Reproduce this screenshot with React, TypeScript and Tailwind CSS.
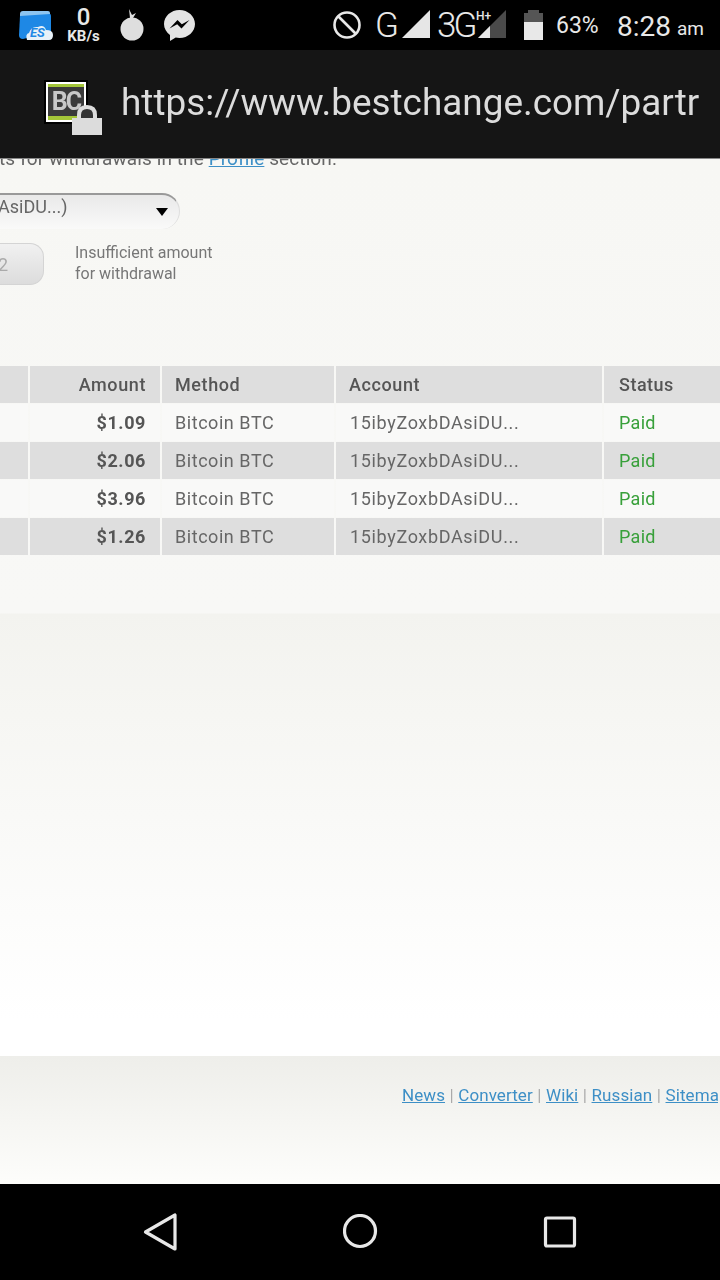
const rows = [
  { amount: '$1.09', shaded: false },
  { amount: '$2.06', shaded: true },
  { amount: '$3.96', shaded: false },
  { amount: '$1.26', shaded: true },
];

const links = ['News', 'Converter', 'Wiki', 'Russian', 'Sitemap'];

function EsIcon() {
  return (
    <svg width="34" height="30" viewBox="0 0 34 30" className="ml-[19px] shrink-0">
      <path d="M1 7 L1 4 Q1 1 4 1 L29 1 Q31 1 31 3 L31 6 Z" fill="#8cc4f0" />
      <path d="M1 6 L31 4 Q32 4 32 6 L32 22 L4 29 Q0 29 0 25 Z" fill="#1e88e5" />
      <path d="M8 30 Q6 24 10 23 Q12 16 19 17 Q25 14 27 20 Q34 20 34 25 Q34 30 30 30 Z" fill="#e8f1f8" />
      <text x="11" y="27" fontSize="13" fontWeight="700" fontStyle="italic" fill="#1e88e5" fontFamily="Roboto, sans-serif">ES</text>
    </svg>
  );
}

function BombIcon() {
  return (
    <svg width="24" height="32" viewBox="0 0 24 32" className="ml-[20px] shrink-0">
      <path d="M9 0 L12 6 L16 4 L13 9 L10 9 Z" fill="#dedede" />
      <circle cx="12" cy="20" r="11.500" fill="#dedede" />
    </svg>
  );
}

function MessengerIcon() {
  return (
    <svg width="31" height="31" viewBox="0 0 31 31" className="ml-[20px] shrink-0">
      <path d="M15.500 0 C7 0 0 6.300 0 14 C0 18.400 2.300 22.300 6 24.900 L6 31 L11.700 27.600 C12.900 27.900 14.200 28 15.500 28 C24 28 31 21.700 31 14 C31 6.300 24 0 15.500 0 Z" fill="#e4e4e4" />
      <path d="M5.500 18.500 L13.500 10 L17.800 14.300 L25.500 10 L17.500 18.500 L13.200 14.200 Z" fill="#000" />
    </svg>
  );
}

function StatusBar() {
  return (
    <div className="flex h-[50px] shrink-0 items-center bg-black text-[#e8e8e8]">
      <EsIcon />
      <div className="ml-[14px] flex w-[33px] shrink-0 flex-col items-center">
        <span className="h-[21px] text-[24px] font-medium leading-[21px]">0</span>
        <span className="mt-[1px] text-[15px] font-bold leading-[14px] whitespace-nowrap">KB/s</span>
      </div>
      <BombIcon />
      <MessengerIcon />
      <svg width="28" height="28" viewBox="0 0 28 28" className="ml-[138px] shrink-0">
        <circle cx="14" cy="14" r="12.500" fill="none" stroke="#e8e8e8" strokeWidth="2.600" />
        <path d="M5 5 L23 23" stroke="#e8e8e8" strokeWidth="2.600" />
      </svg>
      <span className="ml-[14px] w-[25px] shrink-0 text-[35px] font-light leading-none">G</span>
      <svg width="29" height="30" viewBox="0 0 29 30" className="ml-[2px] shrink-0">
        <path d="M0 28 L28 0 L28 28 Z" fill="#e6e6e6" />
      </svg>
      <span className="ml-[6px] w-[39px] shrink-0 text-[35px] font-light leading-none tracking-[-3px]">3G</span>
      <div className="relative h-[30px] w-[32px] shrink-0">
        <svg width="30" height="30" viewBox="0 0 30 30" className="absolute left-[2px] top-0">
          <path d="M0 28 L28 0 L28 28 Z" fill="#4a4a4a" />
          <path d="M0 28 L12 16 L12 28 Z" fill="#e6e6e6" />
        </svg>
        <span className="absolute left-0 top-0 text-[12px] font-medium leading-[13px]">H+</span>
      </div>
      <div className="ml-[16px] flex h-[30px] w-[19px] shrink-0 flex-col items-center">
        <div className="h-[3px] w-[11px] bg-[#555]" />
        <div className="h-[9px] w-full bg-[#555]" />
        <div className="h-[18px] w-full bg-[#e8e8e8]" />
      </div>
      <span className="ml-[13px] w-[61px] shrink-0 text-[23px] leading-none">63%</span>
      <span className="mt-[3px] text-[28px] leading-none">8:28</span>
      <span className="ml-[6px] mt-[7px] text-[19px] leading-none">am</span>
    </div>
  );
}

function UrlBar() {
  return (
    <div className="flex h-[109px] shrink-0 items-center border-b border-[#888] bg-[#151515] pb-[2px]">
      <div className="relative -mt-[2px] ml-[44px] h-[44px] w-[44px] shrink-0 bg-black p-[2px]">
        <div className="h-full w-full bg-white p-[2px]">
          <div className="flex h-full w-full items-center justify-center border-b-[4px] border-t-[3px] border-b-[#a4c639] border-t-[#a4c639] bg-[#3a3a3a] text-[25px] font-bold leading-none tracking-[-2px] text-[#c8c8c8] blur-[0.5px]">
            BC
          </div>
        </div>
        <svg width="30" height="31" viewBox="0 0 30 31" className="absolute left-[28px] top-[25px]">
          <path d="M7 16 L7 10 Q7 2 15 2 Q23 2 23 10 L23 16 Z" fill="#333" stroke="#dcdcdc" strokeWidth="4" />
          <rect x="0" y="13" width="30" height="17" fill="#dcdcdc" />
        </svg>
      </div>
      <span className="ml-[33px] whitespace-nowrap text-[36.9px] leading-none text-[#dcdcdc] blur-[0.3px]">https://www.bestchange.com/partr</span>
    </div>
  );
}

function Table() {
  const row = 'grid grid-cols-[28px_130px_172px_266px_116px] gap-x-[2px]';
  const head = 'flex h-[37px] items-center bg-[#dedede]';
  return (
    <div className="mt-[81px] flex flex-col gap-y-[1px] whitespace-nowrap text-[18px] text-[#666]">
      <div className={`${row} font-medium tracking-[0.6px] text-[#555]`}>
        <div className={head} />
        <div className={`${head} justify-end pr-[14px]`}>Amount</div>
        <div className={`${head} pl-[13px]`}>Method</div>
        <div className={`${head} pl-[13px]`}>Account</div>
        <div className={`${head} pl-[15px] tracking-[0.5px]`}>Status</div>
      </div>
      {rows.map((r) => {
        const bg = r.shaded ? 'bg-[#dedede]' : 'bg-[#f9f9f8]';
        const cell = `flex h-[37px] items-center ${bg}`;
        return (
          <div key={r.amount} className={row}>
            <div className={cell} />
            <div className={`${cell} justify-end pr-[14px] font-bold tracking-[0.6px] text-[#555]`}>{r.amount}</div>
            <div className={`${cell} pl-[13px] tracking-[0.55px]`}>Bitcoin BTC</div>
            <div className={`${cell} pl-[14px] tracking-[0.65px]`}>15ibyZoxbDAsiDU...</div>
            <div className={`${cell} pl-[15px] tracking-[0.3px] text-[#38a03a]`}>Paid</div>
          </div>
        );
      })}
    </div>
  );
}

function Page() {
  return (
    <div className="flex h-[897px] flex-col overflow-hidden bg-[linear-gradient(#f7f7f4_0,#f8f8f6_454px,#f3f3ef_455px,#ffffff_860px)] font-['Roboto',sans-serif] blur-[0.5px]">
      <div className="-mt-[10px] h-[20px] whitespace-nowrap text-[19px] leading-[20px] tracking-[0.1px] text-[#666]">
        <span className="-ml-[1px]">ts for withdrawals in the </span>
        <span className="text-[#3d8fc6] underline">Profile</span> section.
      </div>
      <div className="mt-[24px] flex h-[36px] w-[180px] items-center justify-between rounded-r-[18px] border-r border-t-[2px] border-r-[#ddd] border-t-[#999] bg-[linear-gradient(#e9e9e9,#fafaf9)] pb-[11px] pr-[11px] text-[18px] text-[#666]">
        <span className="-ml-[2px] whitespace-nowrap">AsiDU...)</span>
        <span className="mt-[11px] h-0 w-0 border-x-[6px] border-t-[8px] border-x-transparent border-t-black" />
      </div>
      <div className="mt-[14px] flex items-center">
        <div className="flex h-[42px] w-[44px] shrink-0 items-center rounded-r-[14px] border border-l-0 border-[#d4d4d4] bg-[linear-gradient(#f1f1f1,#dcdcdc)] text-[18px] text-[#aaa]">
          <span className="-ml-[2px]">2</span>
        </div>
        <div className="-mt-[2px] ml-[31px] text-[16px] leading-[21px] text-[#777]">
          Insufficient amount
          <br />
          for withdrawal
        </div>
      </div>
      <Table />
    </div>
  );
}

function Footer() {
  return (
    <div className="h-[128px] shrink-0 overflow-hidden bg-[linear-gradient(#eeeeea,#fdfdfb)] pl-[402px] pt-[29px] font-['Roboto',sans-serif] blur-[0.5px]">
      <div className="flex gap-x-[4.500px] whitespace-nowrap text-[17px] leading-[20px] tracking-[0.08px] text-[#3d8fc6]">
        {links.map((l, i) => (
          <span key={l} className="flex gap-x-[4.500px]">
            {i > 0 && <span className="text-[#aaa]">|</span>}
            <span className="underline">{l}</span>
          </span>
        ))}
      </div>
    </div>
  );
}

function NavBar() {
  return (
    <div className="flex h-[96px] shrink-0 items-center bg-black pb-[1px]">
      <svg width="36" height="40" viewBox="0 0 36 40" className="ml-[143px] shrink-0">
        <path d="M2.500 20 L32 3 L32 37 Z" fill="none" stroke="#e8e8e8" strokeWidth="3.200" strokeLinejoin="round" />
      </svg>
      <svg width="36" height="36" viewBox="0 0 36 36" className="ml-[164px] shrink-0">
        <circle cx="17" cy="17" r="15.500" fill="none" stroke="#e8e8e8" strokeWidth="3.200" />
      </svg>
      <svg width="34" height="34" viewBox="0 0 34 34" className="ml-[164px] shrink-0">
        <rect x="2.500" y="3" width="29" height="28" rx="1.500" fill="none" stroke="#e8e8e8" strokeWidth="3.200" />
      </svg>
    </div>
  );
}

export default function App() {
  return (
    <div className="flex h-[1280px] w-[720px] flex-col overflow-hidden bg-white font-['Roboto',sans-serif]">
      <StatusBar />
      <UrlBar />
      <Page />
      <Footer />
      <NavBar />
    </div>
  );
}
